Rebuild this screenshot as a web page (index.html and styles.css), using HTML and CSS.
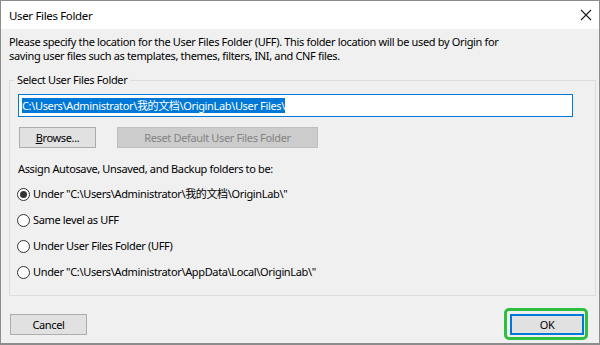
FILE: index.html
```html
<!DOCTYPE html>
<html lang="en">
<head>
  <meta charset="UTF-8" />
  <title>User Files Folder</title>
  <link rel="stylesheet" href="styles.css">
</head>
<body>
  <div class="window">
    <div class="titlebar">
      <span class="title">User Files Folder</span>
      <svg class="close" width="12" height="12" viewBox="0 0 12 12">
        <path d="M1 1 L11 11 M11 1 L1 11" stroke="#1b1b1b" stroke-width="1.1" fill="none"/>
      </svg>
    </div>

    <div class="content">
      <p class="intro">Please specify the location for the User Files Folder (UFF). This folder location will be used by Origin for<br>saving user files such as templates, themes, filters, INI, and CNF files.</p>

      <fieldset class="group">
        <legend>Select User Files Folder</legend>

        <div class="path-input">
          <span class="selected">C:\Users\Administrator\我的文档\OriginLab\User Files\</span>
        </div>

        <div class="button-row">
          <button class="btn btn-browse"><u>B</u>rowse...</button>
          <button class="btn btn-reset" disabled>Reset Default User Files Folder</button>
        </div>

        <p class="assign">Assign Autosave, Unsaved, and Backup folders to be:</p>

        <div class="radio-list">
          <label class="radio checked"><span class="dot"></span>Under "C:\Users\Administrator\我的文档\OriginLab\"</label>
          <label class="radio"><span class="dot"></span>Same level as UFF</label>
          <label class="radio"><span class="dot"></span>Under User Files Folder (UFF)</label>
          <label class="radio"><span class="dot"></span>Under "C:\Users\Administrator\AppData\Local\OriginLab\"</label>
        </div>
      </fieldset>

      <div class="footer">
        <button class="btn btn-cancel">Cancel</button>
        <span class="highlight">
          <button class="btn btn-ok">OK</button>
        </span>
      </div>
    </div>
  </div>
</body>
</html>
```

FILE: styles.css
```css
:root {
  --face: #f0f0f0;
  --btn: #e1e1e1;
  --btn-border: #adadad;
  --accent: #0078d7;
  --green: #2fbf3e;
  --ui-font: "Segoe UI", "Noto Sans", "Noto Sans CJK SC", sans-serif;
}

* {
  margin: 0;
  padding: 0;
  box-sizing: border-box;
}

body {
  width: 600px;
  height: 345px;
  overflow: hidden;
  font-family: var(--ui-font);
  font-size: 11px;
  letter-spacing: -0.35px;
  color: #000;
  background: #fff;
}

.window {
  width: 600px;
  height: 345px;
  border: 1px solid #8c8c8c;
  border-bottom-width: 2px;
  display: flex;
  flex-direction: column;
  background: var(--face);
}

.titlebar {
  height: 28px;
  flex: none;
  background: #fff;
  display: flex;
  align-items: center;
  justify-content: space-between;
  padding: 0 7px 0 8px;
  font-size: 11.5px;
}

.close {
  display: block;
}

.content {
  flex: 1;
  padding: 6px 3px 0 8px;
  display: flex;
  flex-direction: column;
}

.intro {
  line-height: 14px;
}

.group {
  margin-top: 10px;
  border: 1px solid #dcdcdc;
  padding: 7px 0 0 8px;
  height: 223px;
}

.group legend {
  margin-left: -4px;
  padding: 0 3px;
  line-height: 14px;
}

.path-input {
  width: 555px;
  height: 23px;
  background: #fff;
  border: 1px solid var(--accent);
  padding: 3px 3px;
  display: flex;
  align-items: center;
}

.selected {
  background: var(--accent);
  color: #fff;
  line-height: 15px;
}

.button-row {
  display: flex;
  gap: 21px;
  margin: 10px 0 0 1px;
}

.btn {
  font-family: var(--ui-font);
  font-size: 11px;
  letter-spacing: -0.35px;
  color: #000;
  height: 21px;
  background: var(--btn);
  border: 1px solid var(--btn-border);
  display: flex;
  align-items: center;
  justify-content: center;
}

.btn u {
  text-decoration-thickness: 1px;
}

.btn-browse {
  width: 77px;
}

.btn-reset {
  width: 201px;
  background: #cccccc;
  border-color: #bfbfbf;
  color: #838383;
}

.assign {
  margin-top: 14px;
  line-height: 14px;
}

.radio-list {
  margin-top: 11px;
  display: flex;
  flex-direction: column;
  gap: 12px;
}

.radio {
  display: flex;
  align-items: center;
  line-height: 14px;
  margin-left: -1px;
}

.dot {
  width: 13px;
  height: 13px;
  border: 1px solid #333;
  border-radius: 50%;
  background: #fff;
  margin-right: 3px;
  display: flex;
  align-items: center;
  justify-content: center;
  flex: none;
}

.radio.checked .dot::after {
  content: "";
  width: 7px;
  height: 7px;
  border-radius: 50%;
  background: #333;
}

.footer {
  display: flex;
  justify-content: space-between;
  align-items: center;
  margin-top: 12px;
  padding: 0 8px 0 1px;
}

.btn-cancel {
  width: 77px;
}

.highlight {
  border: 3px solid var(--green);
  border-radius: 5px;
  padding: 3px 1px 2px 3px;
}

.btn-ok {
  width: 74px;
  border: 2px solid var(--accent);
}
```
